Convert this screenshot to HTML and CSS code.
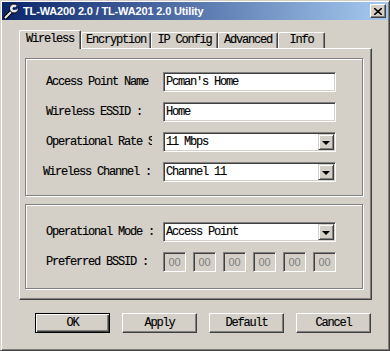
FILE: index.html
```html
<!DOCTYPE html>
<html lang="en">
<head>
    <meta charset="UTF-8">
    <title>TL-WA200 2.0 / TL-WA201 2.0 Utility</title>
    <link rel="stylesheet" href="styles.css">
</head>
<body>
    <div class="window">
        <div class="titlebar">
            <svg class="app-icon" width="16" height="16" viewBox="0 0 16 16">
                <line x1="2.5" y1="14.5" x2="9" y2="8" stroke="#000" stroke-width="4" stroke-linecap="round"/>
                <line x1="2.5" y1="14.5" x2="9" y2="8" stroke="#e8e8e8" stroke-width="2" stroke-linecap="round"/>
                <circle cx="11" cy="5.5" r="4.5" fill="#e8e8e8" stroke="#000" stroke-width="1"/>
                <path d="M11 5.5 L14 2.5 L16 4.5 L13 7 Z" fill="#0a246a"/>
                <circle cx="11" cy="5.5" r="1.5" fill="#0a246a"/>
            </svg>
            <span class="title">TL-WA200 2.0 / TL-WA201 2.0 Utility</span>
            <div class="close-btn">
                <svg width="8" height="7" viewBox="0 0 8 7">
                    <path d="M0 0 L8 7 M8 0 L0 7" stroke="#000" stroke-width="1.6"/>
                </svg>
            </div>
        </div>

        <div class="client">
            <div class="tabs">
                <div class="tab tab-wireless active">Wireless</div>
                <div class="tab tab-encryption">Encryption</div>
                <div class="tab tab-ip">IP Config</div>
                <div class="tab tab-advanced">Advanced</div>
                <div class="tab tab-info">Info</div>
            </div>

            <div class="panel">
                <div class="group group-main">
                    <div class="row">
                        <span class="label">Access Point Name</span>
                        <div class="field">Pcman's Home</div>
                    </div>
                    <div class="row">
                        <span class="label">Wireless ESSID :</span>
                        <div class="field">Home</div>
                    </div>
                    <div class="row">
                        <span class="label label-clip">Operational Rate Settings :</span>
                        <div class="field combo">
                            <span class="combo-text">11 Mbps</span>
                            <div class="drop-btn"><span class="arrow"></span></div>
                        </div>
                    </div>
                    <div class="row">
                        <span class="label label-shift">Wireless Channel :</span>
                        <div class="field combo">
                            <span class="combo-text">Channel 11</span>
                            <div class="drop-btn"><span class="arrow"></span></div>
                        </div>
                    </div>
                </div>

                <div class="group group-mode">
                    <div class="row">
                        <span class="label">Operational Mode :</span>
                        <div class="field combo">
                            <span class="combo-text">Access Point</span>
                            <div class="drop-btn"><span class="arrow"></span></div>
                        </div>
                    </div>
                    <div class="row">
                        <span class="label">Preferred BSSID :</span>
                        <div class="bssid">
                            <div class="octet">00</div>
                            <div class="octet">00</div>
                            <div class="octet">00</div>
                            <div class="octet">00</div>
                            <div class="octet">00</div>
                            <div class="octet">00</div>
                        </div>
                    </div>
                </div>
            </div>

            <div class="buttons">
                <div class="btn btn-default">OK</div>
                <div class="btn">Apply</div>
                <div class="btn">Default</div>
                <div class="btn">Cancel</div>
            </div>
        </div>
    </div>
</body>
</html>
```

FILE: styles.css
```css
* {
    box-sizing: border-box;
}

body {
    margin: 0;
    background: #D4D0C8;
    font-family: "Liberation Mono", "DejaVu Sans Mono", monospace;
    font-size: 12px;
    letter-spacing: -1.2px;
    -webkit-text-stroke: 0.15px #000;
    color: #000;
}

.window {
    width: 390px;
    height: 351px;
    border: 1px solid;
    border-color: #D4D0C8 #404040 #404040 #D4D0C8;
    box-shadow: inset 1px 1px #fff, inset -1px -1px #808080;
    padding: 1px;
    display: flex;
    flex-direction: column;
}

/* title bar */
.titlebar {
    height: 18px;
    background: linear-gradient(to right, #0A246A, #A6CAF0);
    display: flex;
    align-items: center;
    padding: 0 2px 0 1px;
}

.app-icon {
    flex: none;
}

.title {
    margin-left: 4px;
    flex: 1;
    color: #fff;
    font-family: "Liberation Sans", Arial, sans-serif;
    font-weight: bold;
    font-size: 11px;
    letter-spacing: -0.15px;
    -webkit-text-stroke: 0;
    white-space: nowrap;
}

.close-btn {
    width: 16px;
    height: 14px;
    border: 1px solid;
    border-color: #fff #404040 #404040 #fff;
    box-shadow: inset -1px -1px #808080;
    background: #D4D0C8;
    display: flex;
    align-items: center;
    justify-content: center;
}

/* tabs */
.client {
    flex: 1;
    padding-top: 10px;
}

.tabs {
    display: flex;
    align-items: flex-end;
    height: 18px;
    margin-left: 17px;
}

.tab {
    height: 16px;
    border-top: 1px solid #fff;
    border-left: 1px solid #fff;
    border-right: 1px solid #404040;
    box-shadow: inset -1px 0 #808080;
    border-radius: 2px 2px 0 0;
    text-align: center;
    line-height: 15px;
    background: #D4D0C8;
}

.tab.active {
    height: 19px;
    margin-bottom: -1px;
    position: relative;
    z-index: 1;
    line-height: 16px;
}

.tab-wireless { width: 62px; }
.tab-encryption { width: 70px; }
.tab-ip { width: 67px; }
.tab-advanced { width: 60px; }
.tab-info { width: 47px; }

.panel {
    margin-left: 17px;
    width: 353px;
    height: 252px;
    border: 1px solid;
    border-color: #fff #404040 #404040 #fff;
    box-shadow: inset -1px -1px #808080;
    padding: 9px 0 0 5px;
}

/* group boxes */
.group {
    width: 338px;
    border: 1px solid #808080;
    box-shadow: inset 1px 1px #fff, 1px 1px #fff;
    padding-left: 20px;
    display: flex;
    flex-direction: column;
    gap: 10px;
}

.group-main {
    height: 138px;
    padding-top: 13px;
}

.group-mode {
    margin-top: 8px;
    height: 85px;
    padding-top: 17px;
}

.row {
    display: flex;
    align-items: center;
    height: 20px;
}

.label {
    width: 117px;
    flex: none;
    white-space: nowrap;
}

.label-clip {
    width: 106px;
    margin-right: 11px;
    overflow: hidden;
}

.label-shift {
    margin-left: -3px;
    width: 120px;
}

/* edit & combo */
.field {
    width: 173px;
    height: 20px;
    background: #fff;
    border: 1px solid;
    border-color: #808080 #fff #fff #808080;
    box-shadow: inset 1px 1px #404040, inset -1px -1px #D4D0C8;
    padding: 0 2px;
    line-height: 18px;
    white-space: nowrap;
}

.combo {
    display: flex;
    padding: 1px 1px 1px 2px;
}

.combo-text {
    flex: 1;
    line-height: 16px;
}

.drop-btn {
    width: 16px;
    height: 16px;
    background: #D4D0C8;
    border: 1px solid;
    border-color: #D4D0C8 #404040 #404040 #D4D0C8;
    box-shadow: inset 1px 1px #fff, inset -1px -1px #808080;
    display: flex;
    align-items: center;
    justify-content: center;
}

.arrow {
    width: 0;
    height: 0;
    border-left: 4px solid transparent;
    border-right: 4px solid transparent;
    border-top: 4px solid #000;
    margin-top: 1px;
}

.bssid {
    display: flex;
    gap: 7px;
}

.octet {
    width: 23px;
    height: 20px;
    border: 1px solid;
    border-color: #808080 #fff #fff #808080;
    box-shadow: inset 1px 1px #404040, inset -1px -1px #D4D0C8;
    color: #808080;
    font-family: "Liberation Sans", Arial, sans-serif;
    font-size: 11px;
    letter-spacing: 0;
    -webkit-text-stroke: 0;
    text-align: center;
    line-height: 18px;
}

/* bottom buttons */
.buttons {
    display: flex;
    gap: 12px;
    margin: 13px 0 0 33px;
}

.btn {
    width: 75px;
    height: 20px;
    border: 1px solid;
    border-color: #fff #404040 #404040 #fff;
    box-shadow: inset -1px -1px #808080;
    text-align: center;
    line-height: 18px;
}

.btn-default {
    border-color: #000;
    box-shadow: inset 1px 1px #fff, inset -1px -1px #404040, inset -2px -2px #808080;
}
```
